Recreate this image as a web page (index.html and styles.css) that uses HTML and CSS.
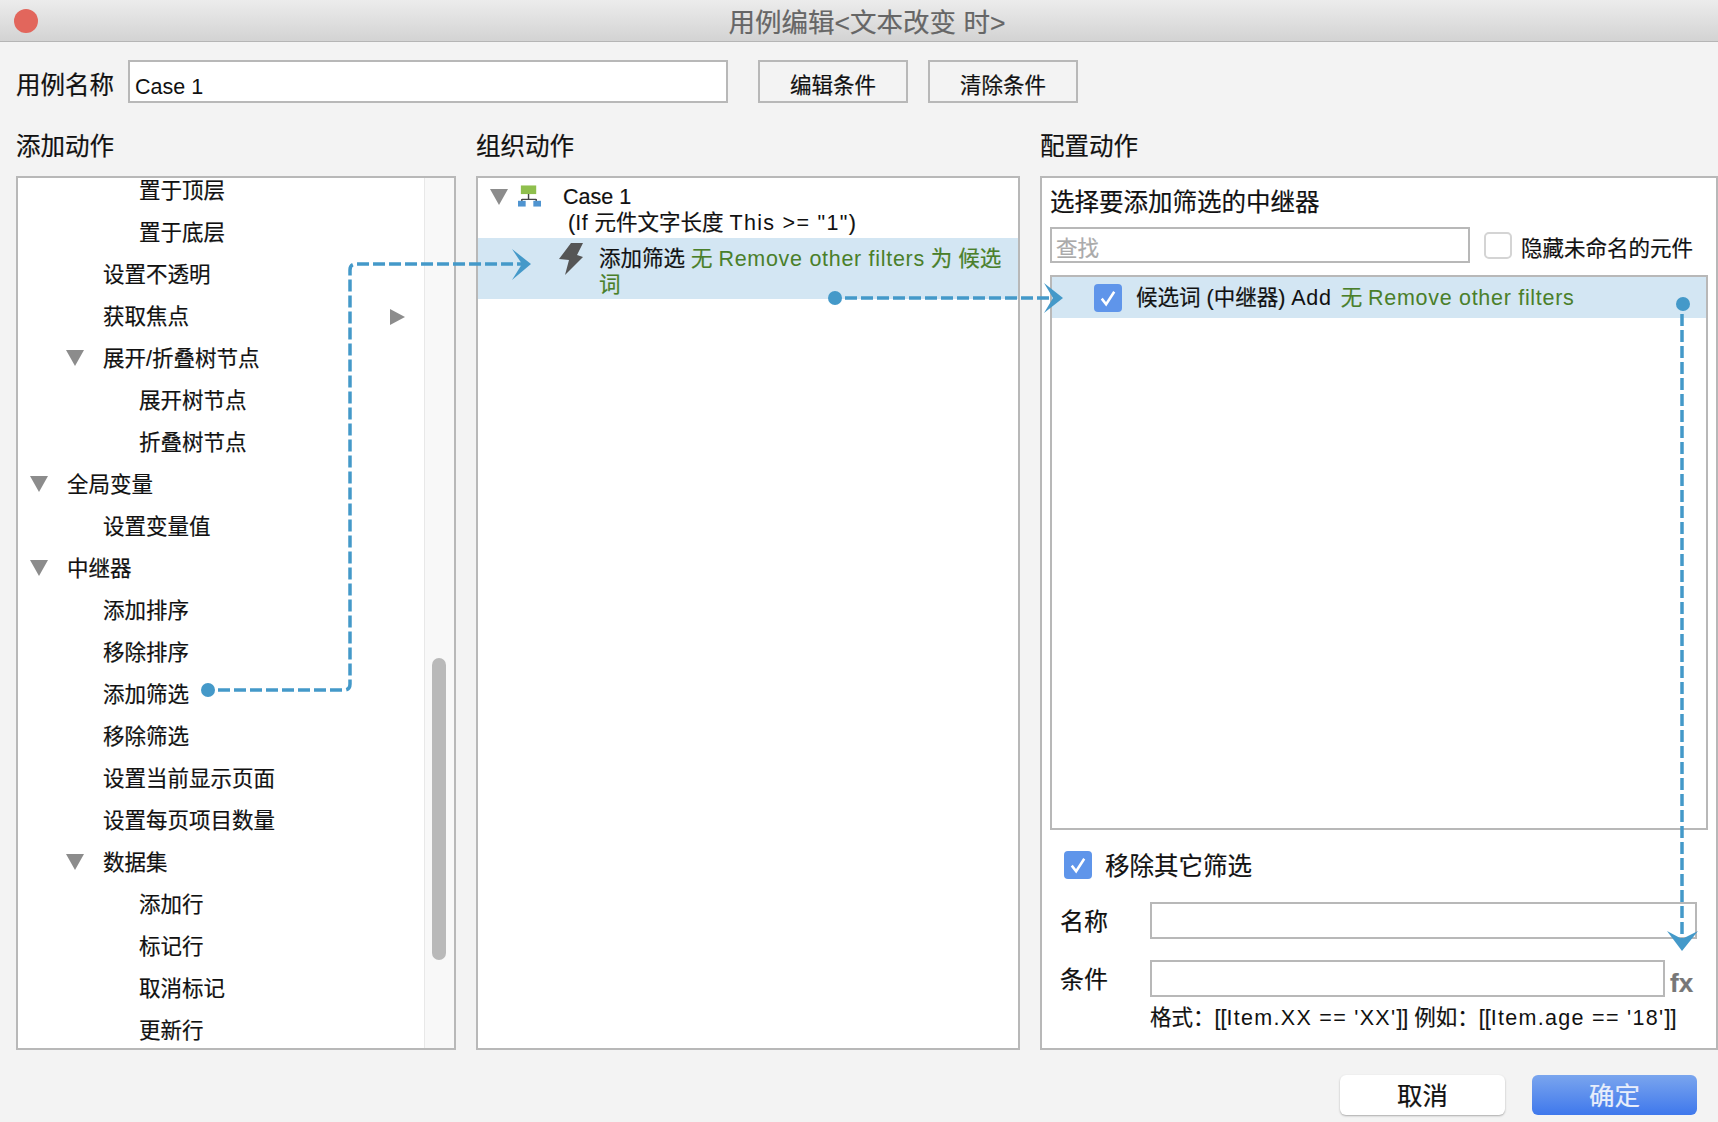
FILE: index.html
```html
<!DOCTYPE html>
<html lang="zh-CN">
<head>
    <meta charset="UTF-8">
    <title>用例编辑</title>
    <link rel="stylesheet" href="styles.css">
</head>
<body>
    <div id="window">
        <div class="titlebar">
            <span class="close"></span>
            <span class="title">用例编辑&lt;文本改变 时&gt;</span>
        </div>

        <div class="name_row">
            <label class="name_label"><span class="nudge">用例名称</span></label>
            <div class="input name_input">Case 1</div>
            <button class="plain_btn edit_btn"><span class="nudge">编辑条件</span></button>
            <button class="plain_btn"><span class="nudge">清除条件</span></button>
        </div>

        <div class="columns">
            <div class="col">
                <h3>添加动作</h3>
                <div class="panel tree_panel">
                    <ul class="tree">
                        <li class="l3">置于顶层</li>
                        <li class="l3">置于底层</li>
                        <li class="l2">设置不透明</li>
                        <li class="l2">获取焦点<span class="tri_right"></span></li>
                        <li class="l2 open"><span class="tri"></span>展开/折叠树节点</li>
                        <li class="l3">展开树节点</li>
                        <li class="l3">折叠树节点</li>
                        <li class="l1 open"><span class="tri"></span>全局变量</li>
                        <li class="l2">设置变量值</li>
                        <li class="l1 open"><span class="tri"></span>中继器</li>
                        <li class="l2">添加排序</li>
                        <li class="l2">移除排序</li>
                        <li class="l2">添加筛选</li>
                        <li class="l2">移除筛选</li>
                        <li class="l2">设置当前显示页面</li>
                        <li class="l2">设置每页项目数量</li>
                        <li class="l2 open"><span class="tri"></span>数据集</li>
                        <li class="l3">添加行</li>
                        <li class="l3">标记行</li>
                        <li class="l3">取消标记</li>
                        <li class="l3">更新行</li>
                    </ul>
                    <div class="scroll_track"><div class="scroll_thumb"></div></div>
                </div>
            </div>

            <div class="col">
                <h3>组织动作</h3>
                <div class="panel">
                    <div class="case_row">
                        <span class="tri case_tri"></span>
                        <svg class="case_icon" width="23" height="22" viewBox="0 0 24 22">
                            <rect x="3" y="0" width="16" height="9" fill="#8fbf4d"/>
                            <path d="M11 9v5M4 14.500h15M4 14v3M19 14v3" stroke="#444" stroke-width="1.500" fill="none"/>
                            <rect x="0" y="16" width="8" height="6" fill="#4f94d0"/>
                            <rect x="16" y="16" width="8" height="6" fill="#4f94d0"/>
                        </svg>
                        <div class="case_text">
                            <div>Case 1</div>
                            <div class="case_cond">(<span class="lat">If</span> 元件文字长度 <span class="lat_wide">This &gt;= "1"</span>)</div>
                        </div>
                    </div>
                    <div class="action_row">
                        <svg class="bolt" width="24" height="32" viewBox="0 0 24 32">
                            <path d="M12 0H24L18 12L24 14L6 32L10 17L0 16Z" fill="#555"/>
                        </svg>
                        <div class="action_text">添加筛选 <span class="green">无 <span class="lat">Remove other filters</span> 为 候选<br>词</span></div>
                    </div>
                </div>
            </div>

            <div class="col">
                <h3>配置动作</h3>
                <div class="panel config">
                    <div class="config_title">选择要添加筛选的中继器</div>
                    <div class="search_row">
                        <div class="input search">查找</div>
                        <span class="check_empty"></span>
                        <span class="hide_label">隐藏未命名的元件</span>
                    </div>
                    <div class="list">
                        <div class="list_row">
                            <span class="check">
                                <svg width="20" height="20" viewBox="0 0 16 16"><path d="M3 8.500L6.500 13L13 3" stroke="#fff" stroke-width="2" fill="none"/></svg>
                            </span>
                            <span class="list_text">候选词 (中继器) <span class="lat">Add</span> <span class="green list_green">无 <span class="lat">Remove other filters</span></span></span>
                        </div>
                    </div>
                    <div class="remove_row">
                        <span class="check">
                            <svg width="20" height="20" viewBox="0 0 16 16"><path d="M3 8.500L6.500 13L13 3" stroke="#fff" stroke-width="2" fill="none"/></svg>
                        </span>
                        <span class="remove_label">移除其它筛选</span>
                    </div>
                    <div class="field field_name">
                        <label>名称</label>
                        <div class="input field_input"></div>
                    </div>
                    <div class="field field_cond">
                        <label>条件</label>
                        <div class="input cond_input"></div>
                        <span class="fx">fx</span>
                    </div>
                    <div class="format">格式：[[<span class="lat_wide">Item.XX == 'XX'</span>]] 例如：[[<span class="lat_wide">Item.age == '18'</span>]]</div>
                </div>
            </div>
        </div>

        <div class="footer">
            <button class="btn cancel">取消</button>
            <button class="btn ok">确定</button>
        </div>

        <!-- 连接箭头 -->
        <svg class="arrows" width="1718" height="1122" viewBox="0 0 1718 1122">
            <g fill="none" stroke="#4499c9" stroke-width="3.500" stroke-dasharray="12 4">
                <path d="M218 690H344Q350 690 350 684V270Q350 264 356 264H524"/>
                <path d="M845 298H1052"/>
                <path d="M1682 314V942"/>
            </g>
            <g fill="#4499c9">
                <circle cx="208" cy="690" r="7"/>
                <path d="M512 249L531 264L512 280L522 264Z"/>
                <circle cx="835" cy="298" r="7"/>
                <path d="M1044 283L1063 298L1044 313L1053 298Z"/>
                <circle cx="1683" cy="304" r="7"/>
                <path d="M1667 931L1682 939L1698 931L1682 951Z"/>
            </g>
        </svg>
    </div>
</body>
</html>
```

FILE: styles.css
```css
* {
    margin: 0;
    padding: 0;
    box-sizing: border-box;
}
body {
    background-color: #f3f3f3;
    font-family: "Liberation Sans", "Noto Sans CJK SC", sans-serif;
    font-size: 21.5px;
    color: #111;
    -webkit-text-stroke: 0.2px;
}
#window {
    position: relative;
    width: 1718px;
    height: 1122px;
    overflow: hidden;
}
.lat {
    letter-spacing: 0.7px;
    -webkit-text-stroke: 0;
}
.lat_wide {
    letter-spacing: 1.3px;
    -webkit-text-stroke: 0;
}
.green {
    color: #4a7f2a;
}
.nudge {
    position: relative;
    top: 1px;
}

/* title bar */
.titlebar {
    display: flex;
    align-items: center;
    height: 42px;
    padding-right: 22px;
    background: linear-gradient(#ececec, #d3d3d3);
    border-bottom: 1px solid #b5b5b5;
}
.close {
    width: 24px;
    height: 24px;
    margin-left: 14px;
    border-radius: 50%;
    background-color: #e2665c;
}
.title {
    flex: 1;
    text-align: center;
    font-size: 26.500px;
    color: #666;
}

/* case name */
.name_row {
    display: flex;
    align-items: center;
    height: 43px;
    margin-top: 18px;
    padding-left: 16px;
}
.name_label {
    width: 112px;
    margin-top: 2px;
    font-size: 24.500px;
}
.input {
    background-color: #fff;
    border: 2px solid #b8b8b8;
}
.name_input {
    width: 600px;
    height: 43px;
    padding: 10px 0 0 5px;
    line-height: 30px;
    -webkit-text-stroke: 0;
}
.plain_btn {
    width: 150px;
    height: 43px;
    margin-left: 20px;
    padding-top: 2px;
    background-color: #f3f3f3;
    border: 2px solid #b8b8b8;
    font: inherit;
    color: #111;
}
.edit_btn {
    margin-left: 30px;
}

/* three columns */
.columns {
    display: grid;
    grid-template-columns: 440px 544px 678px;
    column-gap: 20px;
    margin-top: 27px;
    padding-left: 16px;
}
h3 {
    height: 30px;
    margin-bottom: 16px;
    padding-top: 2px;
    font-size: 24.500px;
    font-weight: normal;
    line-height: 30px;
}
.panel {
    height: 874px;
    background-color: #fff;
    border: 2px solid #b8b8b8;
    overflow: hidden;
}

/* action tree */
.tree_panel {
    display: flex;
}
.tree {
    flex: 1;
    margin-top: -11px;
    list-style: none;
}
.tree li {
    position: relative;
    display: flex;
    align-items: center;
    height: 42px;
    white-space: nowrap;
}
.tree .l1 { padding-left: 49px; }
.tree .l2 { padding-left: 85px; }
.tree .l3 { padding-left: 121px; }
.tree .l1.open { padding-left: 12px; }
.tree .l2.open { padding-left: 48px; }
.tri {
    width: 0;
    height: 0;
    border-left: 9px solid transparent;
    border-right: 9px solid transparent;
    border-top: 16px solid #8c8c8c;
    margin: 4px 19px 0 0;
}
.tri_right {
    position: absolute;
    left: 372px;
    top: 16px;
    width: 0;
    height: 0;
    border-top: 8px solid transparent;
    border-bottom: 8px solid transparent;
    border-left: 15px solid #8c8c8c;
}
.scroll_track {
    width: 30px;
    padding: 480px 8px 0 7px;
    background-color: #f8f8f8;
    border-left: 1px solid #e8e8e8;
}
.scroll_thumb {
    height: 302px;
    border-radius: 8px;
    background-color: #b9b9b9;
}

/* organise actions */
.case_row {
    display: flex;
    align-items: flex-start;
    height: 60px;
    padding-left: 12px;
}
.case_tri {
    margin: 11px 0 0 0;
}
.case_icon {
    margin: 7px 0 0 10px;
}
.case_text {
    margin: 6px 0 0 22px;
    line-height: 26px;
    white-space: nowrap;
}
.case_cond {
    padding-left: 5px;
}
.action_row {
    display: flex;
    align-items: flex-start;
    height: 61px;
    padding: 5px 0 0 81px;
    background-color: #d3e6f3;
}
.action_text {
    margin: 3px 0 0 16px;
    line-height: 26px;
    white-space: nowrap;
}

/* configure action */
.config {
    padding: 10px 0 0 8px;
}
.config_title {
    height: 30px;
    font-size: 24.500px;
    line-height: 30px;
}
.search_row {
    display: flex;
    align-items: center;
    margin-top: 9px;
}
.search {
    width: 420px;
    height: 36px;
    padding: 4px 0 0 4px;
    line-height: 32px;
    color: #aaa;
}
.check_empty {
    width: 28px;
    height: 27px;
    margin-left: 14px;
    background-color: #fff;
    border: 2px solid #d4d4d4;
    border-radius: 5px;
}
.hide_label {
    margin: 3px 0 0 9px;
    white-space: nowrap;
}
.list {
    width: 658px;
    height: 555px;
    margin-top: 12px;
    background-color: #fff;
    border: 2px solid #b8b8b8;
}
.list_row {
    display: flex;
    align-items: center;
    height: 41px;
    padding-left: 42px;
    background-color: #d3e6f3;
}
.check {
    display: flex;
    align-items: center;
    justify-content: center;
    width: 28px;
    height: 28px;
    border-radius: 4px;
    background-color: #5f95ea;
}
.list_text {
    margin: -5px 0 0 14px;
    white-space: nowrap;
}
.list_green {
    margin-left: 3px;
}
.remove_row {
    display: flex;
    align-items: center;
    height: 30px;
    margin-top: 20px;
    padding-left: 14px;
}
.remove_label {
    margin: -1px 0 0 13px;
    font-size: 24.500px;
}
.field {
    display: flex;
    align-items: center;
    height: 37px;
    padding-left: 10px;
}
.field_name {
    margin-top: 22px;
}
.field_cond {
    margin-top: 21px;
}
.field label {
    width: 90px;
    margin-top: -2px;
    font-size: 24px;
}
.field_input {
    width: 547px;
    height: 37px;
}
.cond_input {
    width: 515px;
    height: 37px;
}
.fx {
    margin: 10px 0 0 5px;
    font-size: 26px;
    font-weight: bold;
    color: #777;
}
.format {
    height: 26px;
    margin-top: 8px;
    padding-left: 100px;
    line-height: 26px;
    white-space: nowrap;
}

/* footer buttons */
.footer {
    display: flex;
    justify-content: flex-end;
    gap: 27px;
    margin-top: 25px;
    padding-right: 21px;
}
.btn {
    width: 165px;
    height: 40px;
    padding-bottom: 4px;
    border: none;
    border-radius: 6px;
    font: inherit;
    font-size: 25.500px;
}
.cancel {
    background-color: #fff;
    color: #111;
    box-shadow: 0 1px 2px #aaa;
}
.ok {
    background: linear-gradient(#7aa5ee, #3f78ec);
    color: #e8eefb;
}

/* connector arrows */
.arrows {
    position: absolute;
    left: 0;
    top: 0;
    pointer-events: none;
}
```
